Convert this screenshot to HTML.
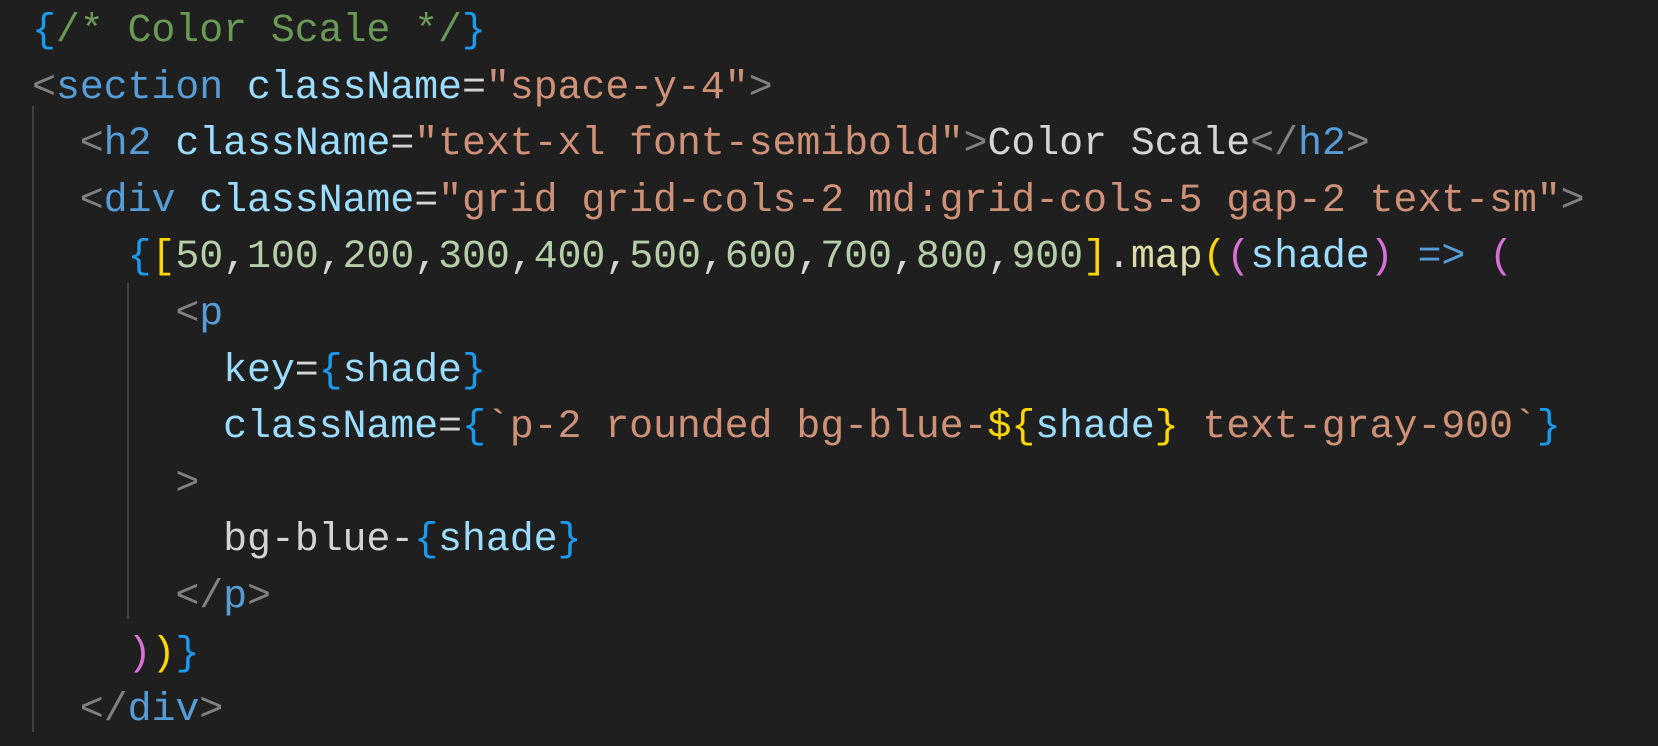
<!DOCTYPE html>
<html><head><meta charset="utf-8"><style>
html,body{margin:0;padding:0;background:#1f1f1f;width:1658px;height:746px;overflow:hidden}
pre{margin:0;position:absolute;left:32px;top:4px;font-family:"Liberation Mono",monospace;font-size:40px;line-height:56.6px;color:#d4d4d4;letter-spacing:-0.12px}
.b{color:#1a9bf0}.c{color:#6a9955}.g{color:#808080}.t{color:#569cd6}.a{color:#9cdcfe}.s{color:#ce9178}.n{color:#b5cea8}.y{color:#ffd700}.p{color:#da70d6}.f{color:#dcdcaa}.w{color:#d4d4d4}
.guide{position:absolute;width:2px;background:#404040}
</style></head><body>
<div class="guide" style="left:32px;top:106px;height:626px"></div>
<div class="guide" style="left:127px;top:283px;height:336px"></div>
<pre><span class="b">{</span><span class="c">/* Color Scale */</span><span class="b">}</span>
<span class="g">&lt;</span><span class="t">section</span> <span class="a">className</span><span class="w">=</span><span class="s">"space-y-4"</span><span class="g">&gt;</span>
  <span class="g">&lt;</span><span class="t">h2</span> <span class="a">className</span><span class="w">=</span><span class="s">"text-xl font-semibold"</span><span class="g">&gt;</span><span class="w">Color Scale</span><span class="g">&lt;/</span><span class="t">h2</span><span class="g">&gt;</span>
  <span class="g">&lt;</span><span class="t">div</span> <span class="a">className</span><span class="w">=</span><span class="s">"grid grid-cols-2 md:grid-cols-5 gap-2 text-sm"</span><span class="g">&gt;</span>
    <span class="b">{</span><span class="y">[</span><span class="n">50</span>,<span class="n">100</span>,<span class="n">200</span>,<span class="n">300</span>,<span class="n">400</span>,<span class="n">500</span>,<span class="n">600</span>,<span class="n">700</span>,<span class="n">800</span>,<span class="n">900</span><span class="y">]</span>.<span class="f">map</span><span class="y">(</span><span class="p">(</span><span class="a">shade</span><span class="p">)</span> <span class="t">=&gt;</span> <span class="p">(</span>
      <span class="g">&lt;</span><span class="t">p</span>
        <span class="a">key</span>=<span class="b">{</span><span class="a">shade</span><span class="b">}</span>
        <span class="a">className</span>=<span class="b">{</span><span class="s">`p-2 rounded bg-blue-</span><span class="y">${</span><span class="a">shade</span><span class="y">}</span><span class="s"> text-gray-900`</span><span class="b">}</span>
      <span class="g">&gt;</span>
        <span class="w">bg-blue-</span><span class="b">{</span><span class="a">shade</span><span class="b">}</span>
      <span class="g">&lt;/</span><span class="t">p</span><span class="g">&gt;</span>
    <span class="p">)</span><span class="y">)</span><span class="b">}</span>
  <span class="g">&lt;/</span><span class="t">div</span><span class="g">&gt;</span>
</pre>
</body></html>
